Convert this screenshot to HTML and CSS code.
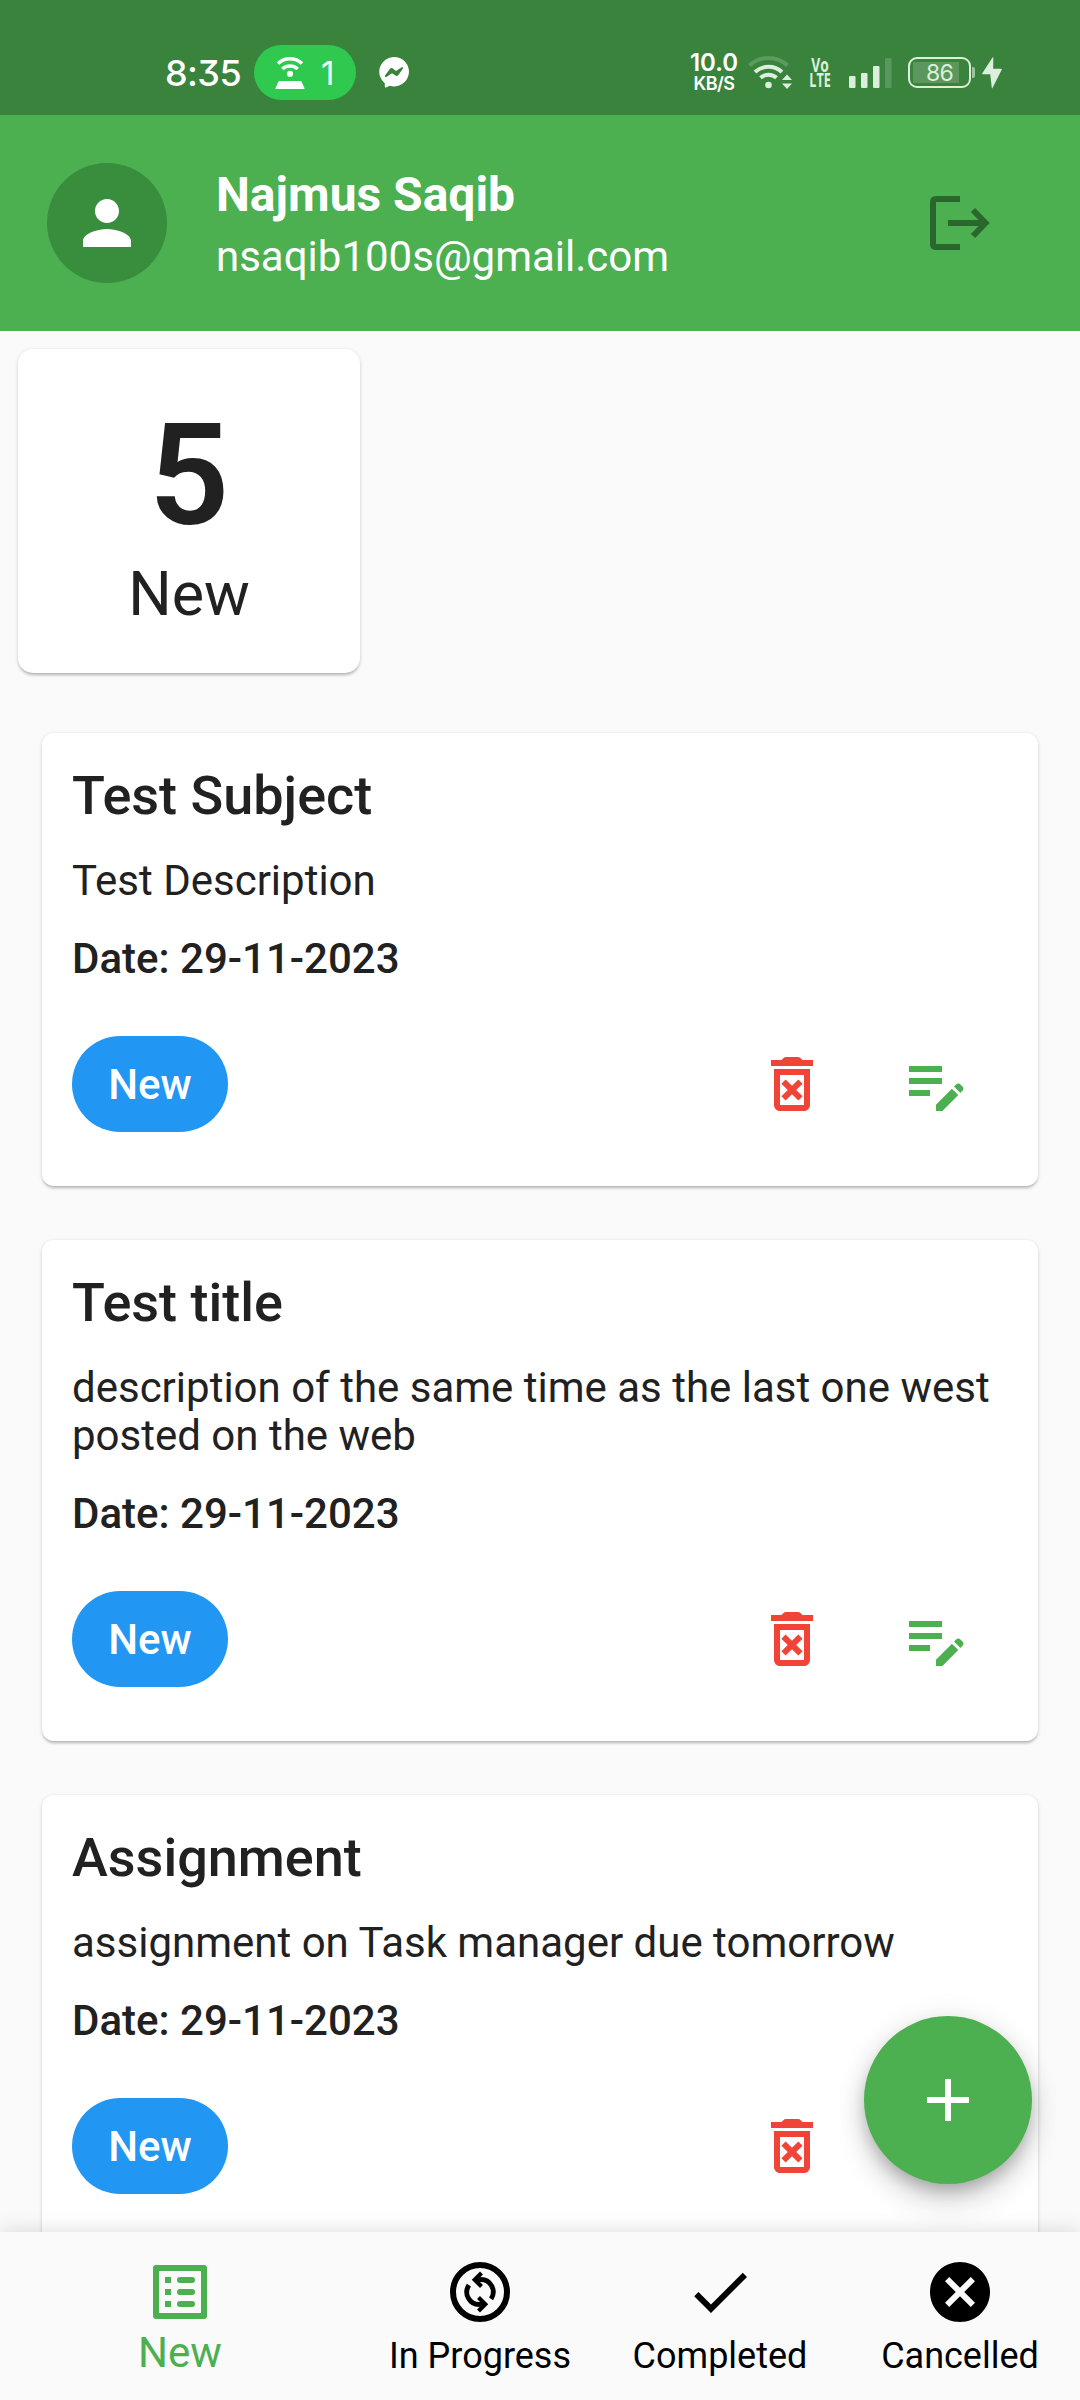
FILE: index.html
```
<!DOCTYPE html>
<html lang="en">
<head>
<meta charset="utf-8">
<title>Task Manager</title>
<link rel="stylesheet" href="styles.css">
</head>
<body>
<svg class="defs" width="0" height="0" aria-hidden="true">
  <symbol id="i-delete" viewBox="0 0 24 24"><path d="M14.12 10.47 12 12.59l-2.13-2.12-1.41 1.41L10.59 14l-2.12 2.12 1.41 1.41L12 15.41l2.12 2.12 1.41-1.41L13.41 14l2.12-2.12zM15.5 4l-.7-.7c-.2-.2-.45-.3-.7-.3H9.9c-.25 0-.5.1-.7.3l-.7.7H5v2h14V4zM6 19c0 1.1.9 2 2 2h8c1.100 0 2-.9 2-2V7H6v12zM8 9h8v10H8V9z"/></symbol>
  <symbol id="i-edit" viewBox="0 0 24 24"><path d="M3 10h11v2H3v-2zm0-2h11V6H3v2zm0 8h7v-2H3v2zm15.010-3.130.71-.71c.39-.39 1.020-.39 1.410 0l.71.71c.39.39.39 1.020 0 1.410l-.71.71-2.120-2.120zm-.71.71-5.300 5.300V21h2.120l5.300-5.300-2.120-2.120z"/></symbol>
</svg>
<div class="app">
  <div class="status">
    <span class="time">8:35</span>
    <div class="hotspot">
      <svg width="30" height="33" viewBox="0 0 30 33"><g fill="none" stroke="#fff" stroke-width="3.600"><path d="M3 7.500A17.500 17.500 0 0 1 27 7.500"/><path d="M7.300 13A11.500 11.500 0 0 1 22.700 13"/></g><circle cx="15" cy="17.800" r="3.100" fill="#fff"/><path d="M5 25h20c1 0 1.500.4 1.800 1.300l2.700 6c.3.700 0 .7-.7.700H1.200c-.7 0-1 0-.7-.7l2.700-6C3.500 25.400 4 25 5 25z" fill="#fff"/></svg>
      <span>1</span>
    </div>
    <svg class="messenger" width="30" height="31" viewBox="0 0 30 31"><path fill="#fff" d="M15 0a15 14.700 0 1 1-4.300 28.800L7 30.500c-.7.300-1.200 0-1.200-.7v-3.600A14.700 14.700 0 0 1 15 0z"/><path fill="#39833c" d="M6 18.500l4.800-6.500c.8-1 2-1.200 3-.5l3.200 2.400 5.300-3.300c1.200-.7 2.300 0 1.700 1l-4.600 6.500c-.8 1.100-2 1.300-3 .5L13 16.300 7.700 19.700c-1.200.7-2.300-.2-1.700-1.200z"/></svg>
    <div class="spacer"></div>
    <div class="speed"><b>10.0</b><b>KB/S</b></div>
    <svg class="wifi" width="45" height="35" viewBox="0 0 45 35"><g fill="none" stroke="#dcefdc" stroke-width="4"><path stroke-opacity=".22" d="M1.500 10.500A27.500 27.500 0 0 1 39.500 10.500"/><path d="M7 17A20 20 0 0 1 34 17"/><path d="M12.500 22.800A12 12 0 0 1 28.500 22.800"/></g><g fill="#dcefdc"><circle cx="20.500" cy="30" r="3.300"/><path d="M39 19.500l5 5.500H34zM39 34l5-5.500H34z"/></g></svg>
    <div class="volte"><b class="vo">Vo</b><b>LTE</b></div>
    <svg class="signal" width="43" height="30" viewBox="0 0 43 30" fill="#dcefdc"><rect y="18" width="6.500" height="12" rx="1"/><rect x="12" y="15" width="6.500" height="15" rx="1"/><rect x="24" y="8" width="6.500" height="22" rx="1"/><rect x="36" width="6.500" height="30" rx="1" opacity=".2"/></svg>
    <div class="battery"><span>86</span></div>
    <svg class="bolt" width="20" height="32" viewBox="0 0 20 32"><path fill="#dcefdc" d="M10.500.5L.3 16.200c-.4.700-.2 1.100.5 1.100h7.400L9.800 31c.1.500.4.500.7 0l9.200-18.200c.3-.6.100-1-.6-1H11.200L11.300.8c0-.6-.4-.8-.8-.3z"/></svg>
  </div>

  <header class="header">
    <div class="avatar"><svg width="72" height="72" viewBox="0 0 24 24" fill="#fff"><path d="M12 12c2.210 0 4-1.790 4-4s-1.790-4-4-4-4 1.790-4 4 1.790 4 4 4zm0 2c-2.670 0-8 1.340-8 4v2h16v-2c0-2.660-5.330-4-8-4z" transform="translate(2.400 0) scale(.8 1)" class="torso"/></svg></div>
    <div class="user"><div class="name">Najmus Saqib</div><div class="email">nsaqib100s@gmail.com</div></div>
    <svg class="logout" width="60" height="54" viewBox="0 0 60 54" fill="none" stroke="#2a672d" stroke-width="6"><path d="M30 3H6Q3 3 3 6V48Q3 51 6 51H30M18 27H55M43 14L55.500 27 43 40"/></svg>
  </header>

  <main class="content">
    <section class="summary"><div class="count">5</div><div class="label">New</div></section>

    <article class="task">
      <h2>Test Subject</h2>
      <p>Test Description</p>
      <p class="date">Date: 29-11-2023</p>
      <div class="actions"><span class="chip">New</span><svg class="del"><use href="#i-delete"/></svg><svg class="edit"><use href="#i-edit"/></svg></div>
    </article>
    <article class="task">
      <h2>Test title</h2>
      <p>description of the same time as the last one west posted on the web</p>
      <p class="date">Date: 29-11-2023</p>
      <div class="actions"><span class="chip">New</span><svg class="del"><use href="#i-delete"/></svg><svg class="edit"><use href="#i-edit"/></svg></div>
    </article>
    <article class="task">
      <h2>Assignment</h2>
      <p>assignment on Task manager due tomorrow</p>
      <p class="date">Date: 29-11-2023</p>
      <div class="actions"><span class="chip">New</span><svg class="del"><use href="#i-delete"/></svg><svg class="edit"><use href="#i-edit"/></svg></div>
    </article>
    <button class="fab" aria-label="Add task"><svg width="42" height="42" viewBox="0 0 42 42"><path d="M18 0h6v18h18v6H24v18h-6V24H0v-6h18z" fill="#fff"/></svg></button>
  </main>

  <nav class="nav">
    <div class="tab active"><svg viewBox="0 0 24 24"><path fill-rule="evenodd" d="M4 3h16a1 1 0 0 1 1 1v16a1 1 0 0 1-1 1H4a1 1 0 0 1-1-1V4a1 1 0 0 1 1-1zM5 5v14h14V5zM7 7h2v2H7zM7 11h2v2H7zM7 15h2v2H7zM12 7h4a1 1 0 0 1 0 2h-4a1 1 0 0 1 0-2zM12 11h4a1 1 0 0 1 0 2h-4a1 1 0 0 1 0-2zM12 15h4a1 1 0 0 1 0 2h-4a1 1 0 0 1 0-2z"/></svg><span>New</span></div>
    <div class="tab"><svg viewBox="-12 -12 24 24"><g fill="none" stroke="#000"><circle r="9" stroke-width="2"/><g stroke-width="1.600"><path d="M-1 -4.150H0A4.150 4.150 0 0 1 3.700 2.300"/><path d="M1 4.150H0A4.150 4.150 0 0 1 -3.700 -2.300"/></g><g stroke-width="1.400"><path d="M.5 -6.350L-1.750 -4.100.5 -1.850"/><path d="M-.5 6.350L1.750 4.100-.5 1.850"/></g></g></svg><span>In Progress</span></div>
    <div class="tab"><svg viewBox="0 0 24 24"><path d="M9 16.170L4.830 12l-1.420 1.410L9 19 21 7l-1.410-1.410z"/></svg><span>Completed</span></div>
    <div class="tab"><svg viewBox="0 0 24 24"><path d="M12 2C6.470 2 2 6.470 2 12s4.470 10 10 10 10-4.470 10-10S17.530 2 12 2zm5 13.590L15.590 17 12 13.410 8.410 17 7 15.590 10.590 12 7 8.410 8.410 7 12 10.590 15.590 7 17 8.410 13.410 12 17 15.590z"/></svg><span>Cancelled</span></div>
  </nav>
</div>
</body>
</html>
```
FILE: styles.css
```
* { box-sizing: border-box; }
body { margin: 0; background: #fafafa; color: #212121; font-family: Roboto, sans-serif; font-size: 42px; line-height: 48px; }
.app { display: flex; flex-direction: column; width: 1080px; height: 2400px; overflow: hidden; }
.defs { position: absolute; }
svg { display: block; flex: none; }
.torso { transform: none; }

.status { display: flex; align-items: center; flex: none; height: 115px; padding: 30px 78px 0 165px; background: #39833c; color: #fff; font-family: Inter, sans-serif; font-feature-settings: "cv09"; }
.time { width: 73px; font-size: 36px; line-height: 44px; letter-spacing: -0.6px; font-weight: 500; }
.hotspot { display: flex; align-items: center; gap: 16px; width: 102px; height: 55px; margin-left: 16px; padding-left: 21px; border-radius: 28px; background: #2fc950; font-size: 33px; }
.messenger { margin-left: 23px; }
.spacer { flex: 1; }
.speed, .volte { display: flex; flex-direction: column; align-items: center; }
.speed { width: 48px; padding-top: 3px; font-size: 24px; line-height: 20px; }
.speed b { font-weight: 600; }
.speed b + b { font-size: 18px; line-height: 22px; letter-spacing: -0.5px; }
.wifi { margin-left: 10px; }
.volte { width: 22px; margin-left: 16px; color: #dcefdc; font-family: "Open Sans", sans-serif; font-size: 19px; line-height: 15px; transform: scaleX(.66); }
.volte .vo { transform: scaleX(1.1); }
.signal { margin-left: 18px; }
.battery { display: flex; align-items: center; justify-content: center; position: relative; width: 63px; height: 31px; margin-left: 16px; border: 2px solid #dcefdc; border-radius: 9px; color: #dcefdc; font-size: 23px; letter-spacing: -0.8px; background: linear-gradient(#5c985d, #5c985d) 3px 3px / 46px 21px no-repeat; }
.battery::after { content: ""; position: absolute; right: -6px; top: 8px; width: 3px; height: 11px; border-radius: 0 2px 2px 0; background: #9cc49d; }
.bolt { margin-left: 11px; }

.header { display: flex; align-items: center; flex: none; height: 216px; padding: 0 90px 0 47px; background: #4caf50; color: #fff; }
.avatar { display: grid; place-items: center; width: 120px; height: 120px; border-radius: 50%; background: #388e3c; }
.user { flex: 1; margin-left: 49px; padding-top: 6px; }
.name { font-size: 48px; line-height: 62px; font-weight: 700; }
.email { line-height: 62px; }

.content { position: relative; display: flex; flex-direction: column; flex: 1; min-height: 0; overflow: hidden; padding: 18px 42px 0; }
.summary { flex: none; width: 342px; height: 324px; margin: 0 0 60px -24px; padding-top: 44px; border-radius: 15px; background: #fff; text-align: center; box-shadow: 0 3px 3px -1px rgba(0,0,0,.2), 0 1px 4px rgba(0,0,0,.14); }
.count { font-size: 141px; line-height: 165px; font-weight: 600; }
.label { font-size: 61px; line-height: 73px; }
.task { flex: none; margin-bottom: 54px; padding: 31px 30px 54px; border-radius: 12px; background: #fff; box-shadow: 0 3px 3px -1px rgba(0,0,0,.2), 0 1px 4px rgba(0,0,0,.14); }
.task h2 { margin: 0 0 30px; font-size: 54px; line-height: 63px; font-weight: 500; }
.task p { margin: 0 0 30px; }
.task .date { margin-bottom: 53px; font-weight: 500; }
.actions { display: flex; align-items: center; padding-right: 36px; }
.actions svg { width: 72px; height: 72px; }
.chip { width: 156px; height: 96px; padding-top: 1px; border-radius: 48px; background: #2196f3; color: #fff; line-height: 96px; text-align: center; font-weight: 500; }
.del { margin-left: auto; fill: #f04438; }
.edit { margin-left: 72px; fill: #4caf50; }
.fab { position: absolute; right: 48px; bottom: 48px; display: grid; place-items: center; width: 168px; height: 168px; padding: 0; border: 0; border-radius: 50%; background: #4caf50; box-shadow: 0 9px 15px -3px rgba(0,0,0,.2), 0 18px 30px rgba(0,0,0,.14), 0 3px 30px rgba(0,0,0,.1); }

.nav { position: relative; display: flex; flex: none; height: 168px; background: #fafafa; color: #000; box-shadow: 0 0 20px rgba(0,0,0,.15); }
.tab { display: flex; flex-direction: column; align-items: center; flex: 0 0 240px; padding-top: 24px; font-size: 36px; line-height: 56px; }
.tab svg { width: 72px; height: 72px; }
.active { flex-basis: 360px; color: #4caf50; fill: #4caf50; font-size: 42px; line-height: 50px; }
```
